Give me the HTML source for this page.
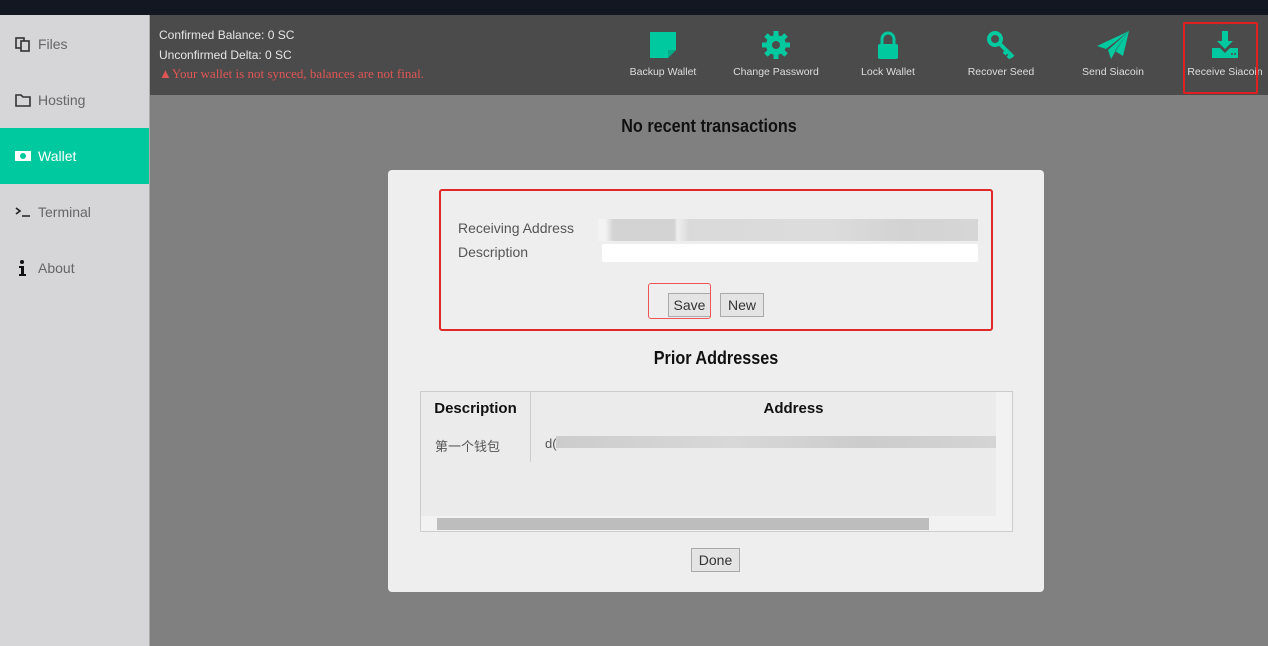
<!DOCTYPE html>
<html><head><meta charset="utf-8"><style>
*{box-sizing:border-box;margin:0;padding:0}
body{width:1268px;height:646px;overflow:hidden;background:#808080;font-family:"Liberation Sans","Noto Sans CJK SC",sans-serif;position:relative}
.abs{position:absolute}
#top{left:0;top:0;width:1268px;height:15px;background:#121722}
#side{left:0;top:15px;width:150px;height:631px;background:#d6d5d7;border-right:1px solid #aaa}
.nav{position:absolute;left:0;width:149px;height:56px;color:#666;font-size:14px;display:flex;align-items:center;padding-left:38px}
.nav svg{position:absolute;left:14px}
.nav.act{background:#00c99f;color:#fff}
#head{left:150px;top:15px;width:1118px;height:80px;background:#4b4b4b}
.bal{color:#e6e6e6;font-size:12px;position:absolute;left:159px}
.btn{position:absolute;top:30px;width:110px;text-align:center;color:#ddd;font-size:10.5px}
.btn svg{display:block;margin:0 auto 6px}
#modal{left:388px;top:170px;width:656px;height:422px;background:#eeeeee;border-radius:4px}
.lbl{position:absolute;font-size:14px;color:#555}
.b{position:absolute;border:1px solid #aaa;background:#e4e4e4;font-size:14px;color:#333;text-align:center;line-height:22px;height:24px}
</style></head><body>
<div class="abs" id="top"></div>
<div class="abs" id="side">
 <div class="nav" style="top:1px"><svg width="18" height="18" viewBox="0 0 18 18" fill="none" stroke="#333" stroke-width="1.6"><rect x="2" y="3" width="8" height="10"/><rect x="7" y="6" width="8" height="10" fill="#d6d5d7"/></svg>Files</div>
 <div class="nav" style="top:57px"><svg width="18" height="18" viewBox="0 0 18 18" fill="none" stroke="#333" stroke-width="1.6"><path d="M2 4h5l2 2h7v9H2z"/></svg>Hosting</div>
 <div class="nav act" style="top:113px"><svg width="18" height="18" viewBox="0 0 18 18"><rect x="1" y="4" width="16" height="10" fill="#fff"/><circle cx="9" cy="9" r="3" fill="#00c99f"/></svg>Wallet</div>
 <div class="nav" style="top:169px"><svg width="18" height="18" viewBox="0 0 18 18" fill="none" stroke="#222" stroke-width="1.6"><path d="M2 5l4 3-4 3M8 13h8"/></svg>Terminal</div>
 <div class="nav" style="top:225px"><svg width="18" height="18" viewBox="0 0 18 18" fill="#111"><circle cx="8" cy="3" r="2"/><path d="M5 7h5v8h2v2H5v-2h2V9H5z"/></svg>About</div>
</div>
<div class="abs" id="head"></div>
<div class="bal" style="top:28px">Confirmed Balance: 0 SC</div>
<div class="bal" style="top:48px">Unconfirmed Delta: 0 SC</div>
<div class="abs" style="left:159px;top:66px;color:#e05555;font-family:'Liberation Serif',serif;font-size:13px">▲Your wallet is not synced, balances are not final.</div>
<div class="btn" style="left:608px"><svg width="30" height="30" viewBox="0 0 30 30"><path d="M2 2h26v18l-8 8H2z" fill="#00c99f"/><path d="M20 28v-8h8" fill="#0a8" /></svg>Backup Wallet</div>
<div class="btn" style="left:721px"><svg width="30" height="30" viewBox="0 0 30 30"><circle cx="15" cy="15" r="10" fill="#00c99f"/><g stroke="#00c99f" stroke-width="5"><path d="M15 1v28M1 15h28M5 5l20 20M25 5L5 25"/></g><circle cx="15" cy="15" r="4" fill="#4b4b4b"/></svg>Change Password</div>
<div class="btn" style="left:833px"><svg width="30" height="30" viewBox="0 0 30 30"><path d="M9 14V9a6 6 0 0112 0v5" fill="none" stroke="#00c99f" stroke-width="3"/><rect x="5" y="14" width="20" height="15" rx="2" fill="#00c99f"/></svg>Lock Wallet</div>
<div class="btn" style="left:946px"><svg width="30" height="30" viewBox="0 0 30 30" fill="none" stroke="#00c99f" stroke-width="4"><circle cx="9" cy="9" r="6"/><path d="M13 13l14 14M21 21l-3 3M25 25l-3 3"/></svg>Recover Seed</div>
<div class="btn" style="left:1058px"><svg width="34" height="30" viewBox="0 0 34 30"><path d="M33 1L1 16l9 3zM33 1L12 20l3 9 4-7zM33 1l-6 25-8-5z" fill="#00c99f"/></svg>Send Siacoin</div>
<div class="btn" style="left:1170px"><svg width="30" height="30" viewBox="0 0 30 30"><path d="M12 1h6v10h5l-8 8-8-8h5z" fill="#00c99f"/><path d="M2 18h8l5 5 5-5h8v10H2z" fill="#00c99f"/><circle cx="22" cy="24" r="1" fill="#4b4b4b"/><circle cx="25" cy="24" r="1" fill="#4b4b4b"/></svg>Receive Siacoin</div>
<div class="abs" style="left:1183px;top:22px;width:75px;height:72px;border:2px solid #e02020;border-radius:2px"></div>
<div class="abs" style="left:150px;top:116px;width:1118px;text-align:center;font-size:18px;color:#111;font-weight:bold;transform:scaleX(.9)">No recent transactions</div>
<div class="abs" id="modal"></div>
<div class="abs" style="left:439px;top:189px;width:554px;height:142px;border:2px solid #e02828;border-radius:3px"></div>
<div class="lbl" style="left:458px;top:220px">Receiving Address</div>
<div class="lbl" style="left:458px;top:244px">Description</div>
<div class="abs" style="left:598px;top:219px;width:380px;height:22px;background:linear-gradient(90deg,#f4f4f4 2%,#ccc 4%,#ccc 20%,#eee 21%,#d4d4d4 24%,#d8d8d8 60%,#ccc 80%,#d0d0d0 100%);opacity:.8"></div>
<div class="abs" style="left:602px;top:244px;width:376px;height:18px;background:#fff;border-radius:2px"></div>
<div class="b" style="left:668px;top:293px;width:43px">Save</div>
<div class="b" style="left:720px;top:293px;width:44px">New</div>
<div class="abs" style="left:648px;top:283px;width:63px;height:36px;border:1.5px solid #e55;border-radius:3px"></div>
<div class="abs" style="left:388px;top:348px;width:656px;text-align:center;font-size:18px;font-weight:bold;color:#111;transform:scaleX(.9)">Prior Addresses</div>
<div class="abs" style="left:420px;top:391px;width:593px;height:141px;border:1px solid #ccc;background:#ebebeb"></div>
<div class="abs" style="left:530px;top:392px;width:1px;height:70px;background:#ccc"></div>
<div class="abs" style="left:421px;top:400px;width:109px;text-align:center;font-size:15px;font-weight:bold;color:#111">Description</div>
<div class="abs" style="left:531px;top:400px;width:525px;text-align:center;font-size:15px;font-weight:bold;color:#111">Address</div>
<div class="abs" style="left:435px;top:436px;font-size:13px;color:#555">第一个钱包</div>
<div class="abs" style="left:545px;top:436px;font-size:13px;color:#555">d(</div>
<div class="abs" style="left:556px;top:436px;width:440px;height:12px;background:linear-gradient(90deg,#ccc,#d8d8d8 40%,#ccc 70%,#d4d4d4)"></div>
<div class="abs" style="left:996px;top:392px;width:16px;height:124px;background:#f2f2f2"></div>
<div class="abs" style="left:421px;top:516px;width:591px;height:15px;background:#f2f2f2"></div>
<div class="abs" style="left:437px;top:518px;width:492px;height:12px;background:#bdbdbd"></div>
<div class="b" style="left:691px;top:548px;width:49px">Done</div>
</body></html>
